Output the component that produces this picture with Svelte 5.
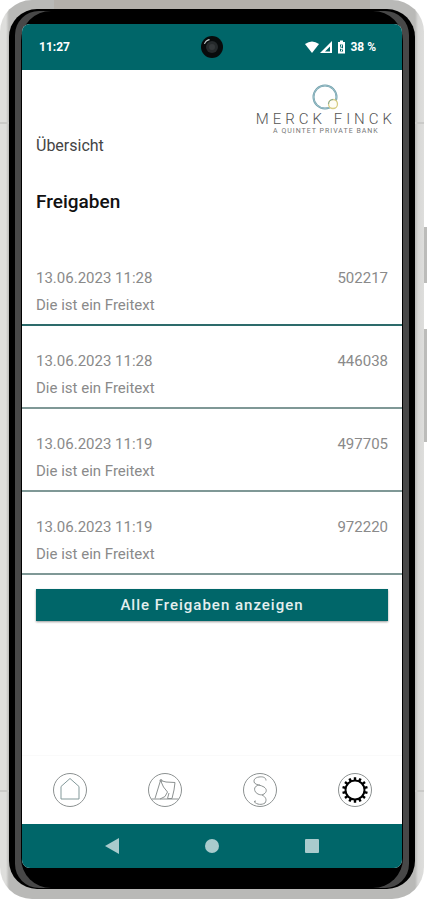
<script lang="ts">
    /* Approvals overview of the banking app, shown inside a phone. */

    const entries = [
        { date: '13.06.2023 11:28', text: 'Die ist ein Freitext', code: '502217' },
        { date: '13.06.2023 11:28', text: 'Die ist ein Freitext', code: '446038' },
        { date: '13.06.2023 11:19', text: 'Die ist ein Freitext', code: '497705' },
        { date: '13.06.2023 11:19', text: 'Die ist ein Freitext', code: '972220' }
    ];

    const tabs = [
        { id: 'home', label: 'Start' },
        { id: 'documents', label: 'Dokumente' },
        { id: 'legal', label: 'Rechtliches' },
        { id: 'settings', label: 'Einstellungen' }
    ];

    // teeth of the settings wheel, in degrees
    const teeth = Array.from({ length: 14 }, (_, i) => (i * 360) / 14);

    let active = $state('settings');
</script>

<div class="phone">
    <span class="key power"></span>
    <span class="key volume"></span>
    <div class="rim">
        <div class="bezel">
            <div class="glass">
                <div class="screen">
                    <div class="status">
                        <span>11:27</span>
                        <svg class="camera" viewBox="0 0 24 24" width="24" height="24" aria-hidden="true">
                            <circle cx="12" cy="12" r="11" fill="#080b0c" />
                            <circle cx="12" cy="12" r="6" fill="#25292b" />
                            <circle cx="12" cy="12" r="3" fill="#34383a" />
                            <path d="M4 9Q5 5 9 4L10 5Q6 6 5 9Z" fill="#c5cdce" />
                        </svg>
                        <span class="signals">
                            <svg viewBox="0 0 42 14" width="42" height="14" aria-hidden="true">
                                <path d="M0 4Q7-1 14 4L7 13Z" fill="#fff" />
                                <path d="M15 13L27 1V13Z" fill="#fff" />
                                <path d="M20 11.500L25 6.500V11.500Z" fill="#006669" />
                                <path d="M33 2H35V0.500H38V2H40V13.500H33Z" fill="#fff" />
                                <path d="M35 4.500H38V11.500H35Z" fill="#006669" />
                                <path d="M37 4.500L35.500 8.500H37.500L36 11.500" stroke="#fff" fill="none" />
                            </svg>
                            38 %
                        </span>
                    </div>

                    <main>
                        <header>
                            <h2>Übersicht</h2>
                            <div class="brand">
                                <svg viewBox="0 0 28 28" width="28" height="28" aria-hidden="true">
                                    <circle cx="13" cy="13" r="11.500" fill="none" stroke="#6c9eab" stroke-width="2" />
                                    <circle cx="13" cy="13" r="11.500" fill="none" stroke="#b4d0d6" stroke-width="0.700" />
                                    <circle cx="21" cy="20" r="4.500" fill="#fffdf5" stroke="#d8cd83" stroke-width="1.300" />
                                    <path d="M16.500 20A4.500 4.500 0 0 1 21 15.500" fill="none" stroke="#83a99b" />
                                </svg>
                                <span class="name">MERCK FINCK</span>
                                <span class="claim">A QUINTET PRIVATE BANK</span>
                            </div>
                        </header>

                        <h1>Freigaben</h1>

                        <ul>
                            {#each entries as entry}
                            <li>
                                <div class="line">
                                    <time>{entry.date}</time>
                                    <span>{entry.code}</span>
                                </div>
                                <p>{entry.text}</p>
                            </li>
                            {/each}
                        </ul>

                        <button class="all" type="button">Alle Freigaben anzeigen</button>
                    </main>

                    <nav class="tabs">
                        {#each tabs as tab}
                        <button type="button" aria-label={tab.label} aria-pressed={active === tab.id} onclick={() => active = tab.id}>
                            <svg viewBox="0 0 36 36" width="36" height="36" fill="none" stroke="#8c9191" aria-hidden="true">
                                <circle cx="18" cy="18" r="16.500" />
                                {#if tab.id === 'home'}
                                <path d="M9 27V14.500L18 6.500L27 14.500V27Z" stroke="#83999a" />
                                {:else if tab.id === 'documents'}
                                <path d="M4.500 27H31.500M8 26.500L13.500 8.500L16.500 15L20.500 20L18 24.500L13 27" />
                                <path d="M13.500 8.500L19 10L28 10.500L27 18L25 26.500H20.500L22 21" />
                                <circle cx="14" cy="8.500" r="1" />
                                {:else if tab.id === 'legal'}
                                <path d="M24 8.500C24 5 20 4.500 17 5C13 5.500 11 8 12.500 11C14 13 19 13 22 15C25 17 25 20 22 22C19 24 15 22 13.500 20C11 16 14 13 18 13" />
                                <path d="M20 23C24 25 25 28 23 31C20 33 15 33 12 29.500L14 29" />
                                {:else}
                                <circle cx="18" cy="18" r="9.500" stroke="#000" stroke-width="2" />
                                {#each teeth as angle}
                                <path d="M18 5.200V9" stroke="#000" stroke-width="2.400" transform="rotate({angle} 18 18)" />
                                {/each}
                                {/if}
                            </svg>
                        </button>
                        {/each}
                    </nav>

                    <div class="system">
                        <button type="button" aria-label="Zurück">
                            <svg viewBox="0 0 16 16" width="16" height="16"><path d="M1 8L15 0V16Z" /></svg>
                        </button>
                        <button type="button" aria-label="Startbildschirm">
                            <svg viewBox="0 0 16 16" width="16" height="16"><circle cx="8" cy="8" r="7" /></svg>
                        </button>
                        <button type="button" aria-label="Letzte Apps">
                            <svg viewBox="0 0 16 16" width="16" height="16"><rect x="1" y="1" width="14" height="14" rx="1" /></svg>
                        </button>
                    </div>
                </div>
            </div>
        </div>
    </div>
</div>

<style>
    :global(body) {
        margin: 0;
        background: #fff;
    }

    .phone {
        position: relative;
        box-sizing: border-box;
        display: flex;
        min-height: 100vh;
        padding: 9px 12px 11px 9px;
        font-family: Roboto, "Liberation Sans", sans-serif;

        /* metal case, the top edge is a little darker */
        &::before {
            content: "";
            position: absolute;
            inset: 0 3px 1px 0;
            border-radius: 32px;
            background:
                linear-gradient(#b4b0ab, #b4b0ab) 54px 0 / calc(100% - 108px) 9px no-repeat,
                linear-gradient(#cacac8, #cacac8) 0 122px / 100% 2px no-repeat,
                linear-gradient(#cacac8, #cacac8) 0 790px / 100% 2px no-repeat,
                linear-gradient(90deg, #dededc 6px, #b9b9b7 9px, #b9b9b7 calc(100% - 9px), #d7d7d6 calc(100% - 6px), #dededc);
        }
    }

    .key {
        position: absolute;
        right: 0;
        width: 3px;
        background: #bcbcba;
    }

    .power {
        top: 227px;
        height: 56px;
    }

    .volume {
        top: 329px;
        height: 113px;
    }

    .rim {
        position: relative;
        flex: 1;
        display: flex;
        padding: 2px 6px 1px;
        border-radius: 28px;
        background: #000;
    }

    .bezel {
        flex: 1;
        display: flex;
        padding: 0 6px;
        border-radius: 24px;
        background: #484848;
    }

    .glass {
        flex: 1;
        display: flex;
        padding: 13px 1px 20px;
        border-radius: 30px;
        background: #000;
    }

    .screen {
        flex: 1;
        display: flex;
        flex-direction: column;
        overflow: hidden;
        border-radius: 8px;
        background: #fff;
    }

    .status {
        display: grid;
        grid-template-columns: 1fr auto 1fr;
        align-items: center;
        height: 46px;
        padding: 0 26px 0 17px;
        background: #006669;
        color: #fff;
        font-size: 12px;
        font-weight: 700;
    }

    .camera {
        margin-left: 8px;
    }

    .signals {
        display: flex;
        justify-content: flex-end;
        align-items: center;
        gap: 3px;
        white-space: nowrap;
    }

    main {
        flex: 1;
        display: flex;
        flex-direction: column;
    }

    header {
        display: flex;
        justify-content: space-between;
        padding: 14px 6px 0 14px;
    }

    h2 {
        margin: 50px 0 0;
        color: #444;
        font-size: 16px;
        font-weight: 400;
        line-height: 24px;
    }

    .brand {
        display: flex;
        flex-direction: column;
        align-items: center;
        color: #777;
    }

    .name {
        color: #555;
        font-size: 15px;
        font-weight: 300;
        line-height: 14px;
        letter-spacing: 4px;
    }

    .claim {
        font-size: 7px;
        line-height: 10px;
        letter-spacing: 1px;
    }

    h1 {
        margin: 32px 14px 29px;
        color: #111;
        font-size: 19px;
        font-weight: 500;
        line-height: 24px;
    }

    ul {
        margin: 0;
        padding: 0;
        list-style: none;
    }

    li {
        padding: 22px 14px 5px;
        border-bottom: 2px solid #7f9896;
        color: #8a8a8a;
        font-size: 15px;
        line-height: 27px;

        &:first-child {
            border-color: #2d6b6b;
        }
    }

    .line {
        display: flex;
        justify-content: space-between;
    }

    p {
        margin: 0;
    }

    button {
        border: 0;
        padding: 0;
        background: none;
        font-family: inherit;
        cursor: pointer;
    }

    .all {
        height: 32px;
        margin: 14px 14px 0;
        background: #006669;
        box-shadow: 0 1px 2px #0006;
        color: #e4efef;
        font-size: 15px;
        font-weight: 500;
        letter-spacing: 1px;
    }

    .tabs {
        display: grid;
        grid-template-columns: repeat(4, 1fr);
        height: 68px;
        border-top: 1px solid #fafafa;

        & button {
            display: grid;
            place-items: center;
        }
    }

    .system {
        display: flex;
        justify-content: center;
        gap: 84px;
        height: 44px;
        background: #006669;
        fill: #a9cbcd;

        & button {
            display: grid;
            place-items: center;
        }
    }
</style>
